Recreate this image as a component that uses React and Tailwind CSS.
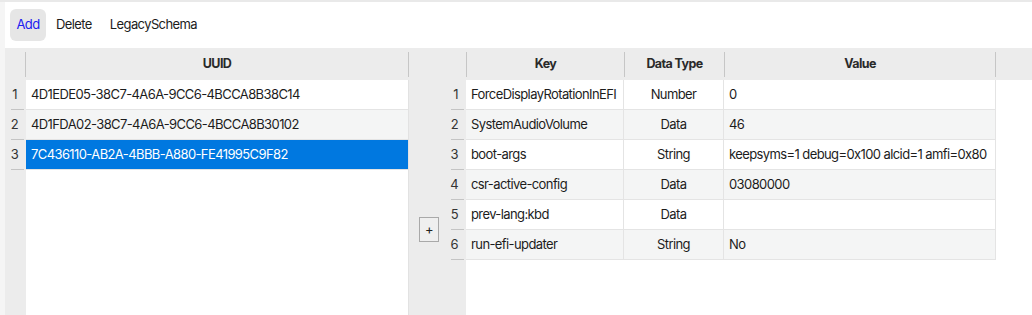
import React from 'react';

const uuids = [
  '4D1EDE05-38C7-4A6A-9CC6-4BCCA8B38C14',
  '4D1FDA02-38C7-4A6A-9CC6-4BCCA8B30102',
  '7C436110-AB2A-4BBB-A880-FE41995C9F82',
];

const entries = [
  { key: 'ForceDisplayRotationInEFI', type: 'Number', value: '0' },
  { key: 'SystemAudioVolume', type: 'Data', value: '46' },
  { key: 'boot-args', type: 'String', value: 'keepsyms=1 debug=0x100 alcid=1 amfi=0x80' },
  { key: 'csr-active-config', type: 'Data', value: '03080000' },
  { key: 'prev-lang:kbd', type: 'Data', value: '' },
  { key: 'run-efi-updater', type: 'String', value: 'No' },
];

const Sep = () => <div className="w-px h-[25px] bg-[#c6c6c6] shrink-0" />;

const RowNum = ({ n, lineClass }) => (
  <div className="h-[30px] flex flex-col">
    <div className={`flex-1 flex items-center ${lineClass.text}`}>{n}</div>
    <div className={`h-px bg-[#c4c4c4] ${lineClass.line}`} />
  </div>
);

const App = () => {
  const selected = 2;

  return (
    <div className="w-[1032px] h-[315px] flex bg-white font-['Inter','Liberation_Sans',sans-serif] text-[13px] tracking-[-0.6px] text-[#1c1c1c] overflow-hidden">
      <div className="w-[5px] bg-[#f5f5f5] shrink-0" />
      <div className="flex-1 flex flex-col">
        <div className="h-[2px] bg-[#e9e9e9] -ml-[5px]" />

        {/* toolbar */}
        <div className="h-[46px] flex items-center pl-[5px] gap-[2px]">
          <button className="h-[32px] w-[36px] rounded-md bg-[#e6e6e6] text-[#2020f0]">Add</button>
          <button className="h-[32px] px-[8px] rounded-md">Delete</button>
          <button className="h-[32px] px-[8px] rounded-md">LegacySchema</button>
        </div>

        <div className="flex-1 flex bg-[#ececec]">
          {/* left table */}
          <div className="w-[404px] flex flex-col shrink-0">
            <div className="h-[32px] flex items-center">
              <div className="w-[20px]" />
              <Sep />
              <div className="flex-1 text-center font-bold text-[12.5px] text-[#2a2a2a]">UUID</div>
              <Sep />
            </div>
            <div className="flex-1 flex">
              <div className="w-[21px] flex flex-col text-[#333]">
                {uuids.map((u, i) => (
                  <RowNum
                    key={u}
                    n={i + 1}
                    lineClass={{ text: 'justify-center pr-[2px]', line: 'ml-[6px] mr-[2px]' }}
                  />
                ))}
              </div>
              <div className="flex-1 bg-white border-r border-[#e2e2e2] flex flex-col">
                {uuids.map((u, i) => (
                  <div
                    key={u}
                    className={`h-[30px] flex items-center pl-[5px] border-b border-[#e4e4e4] ${
                      i === selected ? 'bg-[#0078e0] text-white' : i % 2 === 1 ? 'bg-[#f4f5f5]' : 'bg-white'
                    }`}
                  >
                    {u}
                  </div>
                ))}
              </div>
            </div>
          </div>

          {/* right table */}
          <div className="flex-1 flex flex-col">
            <div className="h-[32px] flex items-center font-bold text-[12.5px] text-[#2a2a2a]">
              <div className="w-[57px]" />
              <Sep />
              <div className="w-[157px] text-center">Key</div>
              <Sep />
              <div className="w-[99px] text-center">Data Type</div>
              <Sep />
              <div className="w-[270px] text-center">Value</div>
              <Sep />
            </div>
            <div className="flex-1 flex">
              <div className="w-[57px] flex flex-col text-[#333] relative">
                {entries.map((e, i) => (
                  <RowNum
                    key={e.key}
                    n={i + 1}
                    lineClass={{ text: 'justify-end pr-[8px]', line: 'ml-[42px] mr-[2px]' }}
                  />
                ))}
                <button className="absolute left-[10px] top-[137px] w-[20px] h-[25px] border border-[#a9a9a9] bg-[#efefef] text-[13px] leading-none text-[#222]">
                  +
                </button>
              </div>
              <div className="flex-1 bg-white flex flex-col">
                {entries.map((e, i) => (
                  <div
                    key={e.key}
                    className={`h-[30px] w-[530px] flex border-b border-[#e4e4e4] ${
                      i % 2 === 1 ? 'bg-[#f4f5f5]' : 'bg-white'
                    }`}
                  >
                    <div className="w-[158px] flex items-center pl-[5px] border-r border-[#e4e4e4] whitespace-nowrap">{e.key}</div>
                    <div className="w-[100px] flex items-center justify-center border-r border-[#e4e4e4]">{e.type}</div>
                    <div className="w-[272px] flex items-center pl-[5px] border-r border-[#e4e4e4] whitespace-nowrap">{e.value}</div>
                  </div>
                ))}
              </div>
            </div>
          </div>
        </div>
      </div>
    </div>
  );
};

export default App;
